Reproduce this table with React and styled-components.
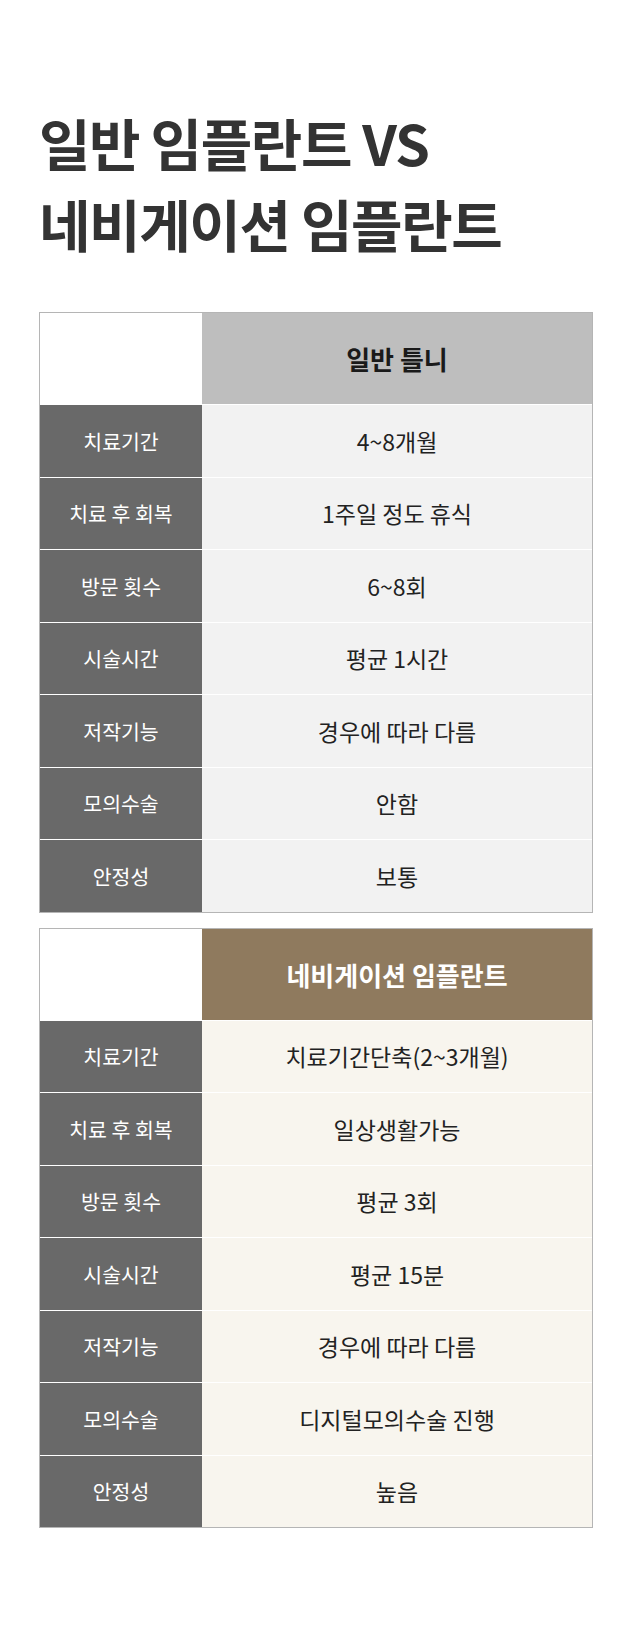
import React from 'react';
import styled, { createGlobalStyle } from 'styled-components';

const GlobalStyle = createGlobalStyle`
  body {
    margin: 0;
    background: #fff;
    font-family: "Noto Sans CJK KR", "Noto Sans", sans-serif;
  }
`;

const Page = styled.div`
  padding: 101px 47px 120px 39px;
`;

const Title = styled.h1`
  margin: 0 0 49px;
  font-size: 56px;
  line-height: 81px;
  font-weight: 700;
  letter-spacing: -0.025em;
  color: #333;
`;

const Table = styled.div`
  border: 1px solid #b5b5b5;
  margin-bottom: 15px;
  display: grid;
  grid-template-columns: 162px 1fr;
`;

const Corner = styled.div`
  height: 91px;
  background: #fff;
`;

const Head = styled.div`
  height: 91px;
  display: flex;
  align-items: center;
  justify-content: center;
  background: ${p => p.$bg};
  color: ${p => p.$color};
  font-size: 26px;
  font-weight: 700;
`;

const Label = styled.div`
  height: 72.5px;
  box-sizing: border-box;
  border-top: 1px solid #fff;
  display: flex;
  align-items: center;
  justify-content: center;
  background: #696969;
  color: #fff;
  font-size: 20.5px;
`;

const Value = styled(Label)`
  background: ${p => p.$bg};
  color: #222;
  font-size: 23px;
`;

const rows = ['치료기간', '치료 후 회복', '방문 횟수', '시술시간', '저작기능', '모의수술', '안정성'];

const tables = [
  {
    title: '일반 틀니',
    headBg: '#bebebe',
    headColor: '#1a1a1a',
    cellBg: '#f2f2f2',
    values: ['4~8개월', '1주일 정도 휴식', '6~8회', '평균 1시간', '경우에 따라 다름', '안함', '보통'],
  },
  {
    title: '네비게이션 임플란트',
    headBg: '#8f7a5e',
    headColor: '#fff',
    cellBg: '#f8f5ee',
    values: ['치료기간단축(2~3개월)', '일상생활가능', '평균 3회', '평균 15분', '경우에 따라 다름', '디지털모의수술 진행', '높음'],
  },
];

const App = () => (
  <Page>
    <GlobalStyle />
    <Title>
      일반 임플란트 VS
      <br />
      네비게이션 임플란트
    </Title>
    {tables.map(t => (
      <Table key={t.title}>
        <Corner />
        <Head $bg={t.headBg} $color={t.headColor}>{t.title}</Head>
        {rows.map((r, i) => (
          <React.Fragment key={r}>
            <Label>{r}</Label>
            <Value $bg={t.cellBg}>{t.values[i]}</Value>
          </React.Fragment>
        ))}
      </Table>
    ))}
  </Page>
);

export default App;
